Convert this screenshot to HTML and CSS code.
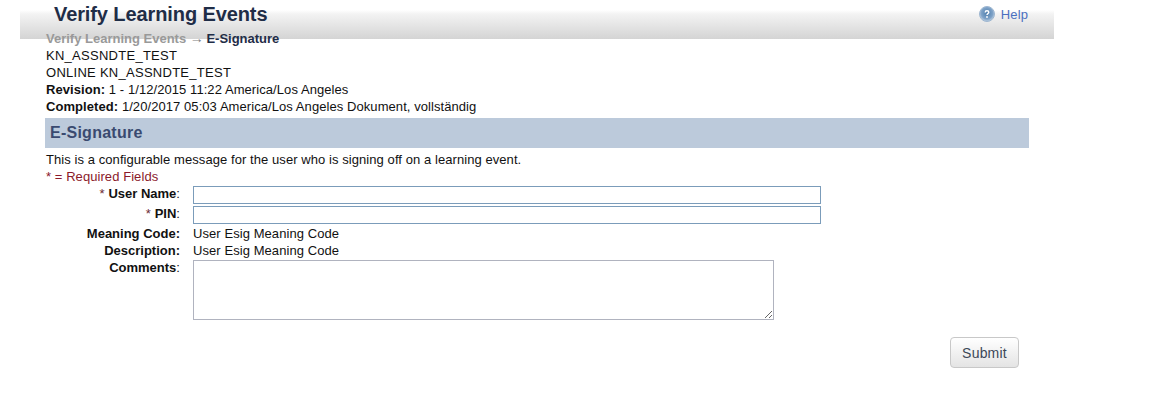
FILE: index.html
```html
<!DOCTYPE html>
<html lang="en">
<head>
    <meta charset="UTF-8">
    <title>Verify Learning Events</title>
    <link rel="stylesheet" href="styles.css">
</head>
<body>
    <div class="page-head">
        <h1>Verify Learning Events</h1>
        <a class="help" href="#">
            <svg class="help-icon" width="16" height="16" viewBox="0 0 16 16">
                <defs>
                    <radialGradient id="helpFill" cx="50%" cy="45%" r="55%">
                        <stop offset="0" stop-color="#4f7fae"/>
                        <stop offset="0.7" stop-color="#7fa3c8"/>
                        <stop offset="1" stop-color="#c2d3e4"/>
                    </radialGradient>
                </defs>
                <circle cx="8" cy="8" r="7.5" fill="url(#helpFill)" stroke="#9db6d0" stroke-width="1"/>
                <path d="M6.2 6.4c0-1 .8-1.6 1.8-1.6s1.8.6 1.8 1.5c0 1.3-1.8 1.3-1.8 2.6" fill="none" stroke="#fff" stroke-width="1.4"/>
                <circle cx="8" cy="11" r="0.9" fill="#fff"/>
            </svg>
            Help
        </a>
    </div>

    <div class="content">
        <div class="breadcrumb"><span class="crumb-link">Verify Learning Events <span class="crumb-arrow">&rarr;</span></span> E-Signature</div>
        <div class="line code-line">KN_ASSNDTE_TEST</div>
        <div class="line code-line">ONLINE KN_ASSNDTE_TEST</div>
        <div class="line"><b>Revision:</b> 1 - 1/12/2015 11:22 America/Los Angeles</div>
        <div class="line"><b>Completed:</b> 1/20/2017 05:03 America/Los Angeles Dokument, vollständig</div>

        <h2 class="section-bar">E-Signature</h2>

        <div class="line">This is a configurable message for the user who is signing off on a learning event.</div>
        <div class="line required-note">* = Required Fields</div>

        <form class="esig-form">
            <label class="field-label"><span class="star">*</span> <b>User Name</b>:</label>
            <input class="text-input" type="text">

            <label class="field-label"><span class="star">*</span> <b>PIN</b>:</label>
            <input class="text-input" type="text">

            <div class="field-label"><b>Meaning Code:</b></div>
            <div class="field-value">User Esig Meaning Code</div>

            <div class="field-label"><b>Description:</b></div>
            <div class="field-value">User Esig Meaning Code</div>

            <label class="field-label"><b>Comments</b>:</label>
            <textarea class="comments"></textarea>
        </form>

        <div class="actions">
            <button class="submit-btn" type="button">Submit</button>
        </div>
    </div>
</body>
</html>
```

FILE: styles.css
```css
body {
    margin: 0;
    font-family: "Liberation Sans", Arial, sans-serif;
    font-size: 13px;
    letter-spacing: 0.07px;
    line-height: 17px;
    color: #111;
    background-color: #fff;
}

.page-head {
    display: flex;
    justify-content: space-between;
    box-sizing: border-box;
    width: 1034px;
    height: 39px;
    margin-left: 20px;
    padding: 2px 26px 0 34px;
    background: linear-gradient(#fff 10px, #f3f3f3 14px, #d4d4d4 39px);
}

h1 {
    margin: 0;
    font-size: 20px;
    letter-spacing: -0.1px;
    line-height: 24px;
    color: #1f2d47;
}

.help {
    display: flex;
    align-items: center;
    gap: 6px;
    height: 24px;
    font-size: 13px;
    letter-spacing: 0.1px;
    color: #4a6fc0;
    text-decoration: none;
}

.content {
    margin-top: -9px;
    padding-left: 46px;
    width: 983px;
}

.breadcrumb {
    position: relative;
    font-weight: bold;
    letter-spacing: 0;
    color: #1f2d47;
}

.crumb-link {
    color: #999;
}

.crumb-arrow {
    font-size: 14px;
    letter-spacing: -1px;
    line-height: 1;
    color: #808080;
}

.code-line {
    letter-spacing: 0.27px;
}

.section-bar {
    margin: 3px 0 3px -1px;
    padding-left: 5px;
    height: 30px;
    font-size: 16px;
    letter-spacing: 0.25px;
    line-height: 29px;
    color: #3a4a70;
    background-color: #bccadb;
}

.required-note {
    color: #8b1a2b;
}

.esig-form {
    display: grid;
    grid-template-columns: 134px 628px;
    column-gap: 13px;
    align-items: start;
    margin-top: 1px;
}

.field-label,
.field-value {
    line-height: 15px;
    padding-bottom: 2px;
}

.field-label {
    text-align: right;
}

.field-label b {
    letter-spacing: 0;
}

.star {
    color: #6b2a35;
}

.text-input {
    box-sizing: border-box;
    width: 628px;
    height: 18px;
    margin: 0 0 2px;
    padding: 0 3px;
    border: 1px solid #7b9cba;
    background-color: #fff;
}

.comments {
    box-sizing: border-box;
    display: block;
    width: 581px;
    height: 60px;
    margin: 0;
    padding: 2px;
    border: 1px solid #b0b3bf;
    font-family: inherit;
}

.actions {
    display: flex;
    justify-content: flex-end;
    margin: 17px 10px 0 0;
}

.submit-btn {
    box-sizing: border-box;
    width: 69px;
    height: 31px;
    padding: 0;
    border: 1px solid #c8c8c8;
    border-radius: 4px;
    font-family: inherit;
    font-size: 14px;
    letter-spacing: 0.2px;
    color: #3c4858;
    background: linear-gradient(#fff, #e4e4e4);
}
```
